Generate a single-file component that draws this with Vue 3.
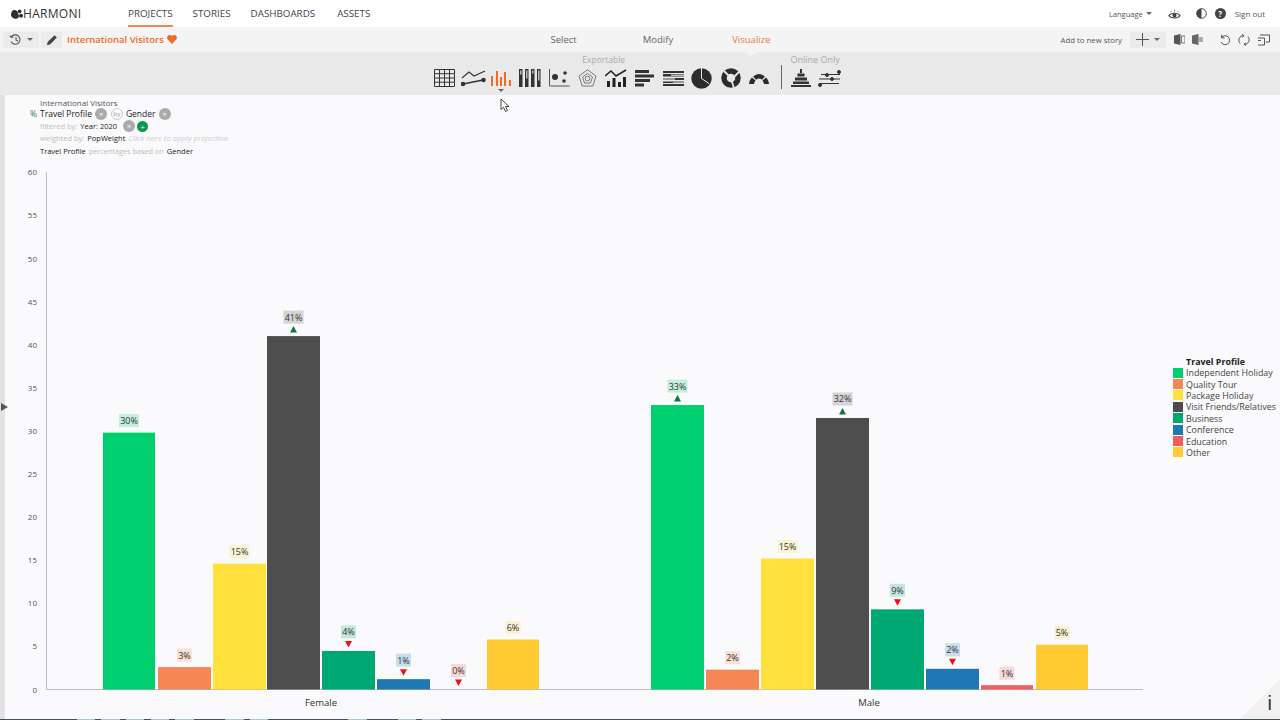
<template>
  <div class="app">
    <header class="nav">
      <div class="logo">
        <svg width="12" height="10" viewBox="0 0 12 10">
          <path d="M0 5.500C0 2.500 2 .5 4 1c1.500.3 2.500 1.500 3 3 .6 2 1.500 3 .5 4.500C6 10.300 3.500 10 2 9 .7 8.200 0 7 0 5.500z" fill="#2e2e2e" />
          <circle cx="8.600" cy="2.300" r="1.900" fill="#2e2e2e" />
          <circle cx="10" cy="6.800" r="2" fill="#2e2e2e" />
        </svg>
        <span>HARMONI</span>
      </div>
      <nav class="nav-links">
        <a class="active">PROJECTS</a>
        <a>STORIES</a>
        <a>DASHBOARDS</a>
        <a>ASSETS</a>
      </nav>
      <div class="nav-right">
        <span class="lang">Language <i class="caret"></i></span>
        <svg class="eye" width="13" height="12" viewBox="0 0 13 12">
          <path d="M1 7.500C3 4.500 10 4.500 12 7.500 10 10.800 3 10.800 1 7.500z" fill="none" stroke="#444" stroke-width="1.200" />
          <circle cx="6.500" cy="7.500" r="2" fill="#444" />
          <path d="M2.500 3 3.500 4M6.500 1.500v2M10.500 3 9.500 4" stroke="#777" stroke-width=".8" />
        </svg>
        <svg class="contrast" width="11" height="11" viewBox="0 0 11 11">
          <circle cx="5.500" cy="5.500" r="4.800" fill="#fff" stroke="#444" />
          <path d="M5.500.7a4.800 4.800 0 0 0 0 9.600z" fill="#444" />
        </svg>
        <span class="help">?</span>
        <span class="signout">Sign out</span>
      </div>
    </header>

    <div class="toolbar">
      <div class="tb-left">
        <button class="tb-btn hist">
          <svg width="13" height="12" viewBox="0 0 13 12" fill="none" stroke="#555" stroke-width="1.100">
            <path d="M2.200 3.200A4.700 4.700 0 1 1 2 7.500" />
            <path d="M.8 1.500 2.200 3.500 4.500 3" />
            <path d="M7 3.200V6l2 1.200" />
          </svg>
          <i class="caret"></i>
        </button>
        <button class="tb-btn pen">
          <svg width="12" height="12" viewBox="0 0 12 12">
            <path d="M1 11 1.600 8 8.500 1.200 10.800 3.500 4 10.400z" fill="#444" />
          </svg>
        </button>
        <span class="proj-title">International Visitors</span>
        <svg width="10" height="9" viewBox="0 0 10 9">
          <path d="M5 9 .8 4.600C-.8 2.600.6 0 2.700 0 3.800 0 4.600.6 5 1.300 5.400.6 6.200 0 7.300 0c2.100 0 3.500 2.600 1.900 4.600z" fill="#ee6c21" />
        </svg>
      </div>
      <div class="steps">
        <span>Select</span>
        <span>Modify</span>
        <span class="on">Visualize</span>
      </div>
      <div class="tb-right">
        <span class="add-story">Add to new story</span>
        <button class="tb-btn plus">
          <svg width="13" height="13" viewBox="0 0 13 13"><path d="M6.500 0v13M0 6.500h13" stroke="#555" /></svg>
          <i class="caret"></i>
        </button>
        <svg class="doc" width="11" height="11" viewBox="0 0 11 11">
          <path d="M0 1.500 6.500 0v11L0 9.500z" fill="#555" /><path d="M7.500 2H11v7H7.500z" fill="none" stroke="#777" />
        </svg>
        <svg class="doc" width="11" height="11" viewBox="0 0 11 11">
          <path d="M0 1.500 6.500 0v11L0 9.500z" fill="#666" /><path d="M7 3h4v5H7z" fill="#aaa" />
        </svg>
        <div class="undo-group">
          <svg width="12" height="12" viewBox="0 0 12 12" fill="none" stroke="#555">
            <path d="M2.500 3.500A4.500 4.500 0 1 1 2 8" /><path d="M2.500.8v3h3" />
          </svg>
          <svg width="12" height="12" viewBox="0 0 12 12" fill="none" stroke="#555">
            <path d="M2.200 9.500A4.500 4.500 0 0 1 5 1.700M9.800 2.500A4.500 4.500 0 0 1 7 10.300" /><path d="M4 .3 6 1.700 4.300 3.500M8 11.700 6 10.300 7.700 8.500" />
          </svg>
          <svg width="13" height="12" viewBox="0 0 13 12" fill="none" stroke="#555">
            <path d="M3 1h9.500v7H9M1 4h6.500v7H1" /><path d="M1 6.500h3" />
          </svg>
        </div>
      </div>
    </div>

    <div class="iconbar">
      <div class="tool-group">
        <div class="tool-label"></div>
        <div class="tools">
          <svg width="21" height="18" viewBox="0 0 21 18" fill="none" stroke="#333">
            <path d="M.5.5h20v17H.5zM.5 4.700h20M.5 9h20M.5 13.200h20M5.500.5v17M10.500.5v17M15.500.5v17" />
          </svg>
          <svg width="25" height="18" viewBox="0 0 25 18" fill="none" stroke="#333" stroke-width="1.100">
            <path d="M1 9 8 3l5 4 11-5" />
            <path d="M2 15 22 11" stroke-width="1.300" />
            <circle cx="2" cy="15" r="1.700" fill="#333" />
            <circle cx="22.500" cy="11" r="1.700" fill="#333" />
          </svg>
          <span class="active-tool">
            <svg width="21" height="16" viewBox="0 0 21 16" fill="#ee6c21">
              <path d="M0 6h2v10H0zM5 1h2v15H5zM9 7h2v9H9zM13 2h2v14h-2zM18 10h2v6h-2z" />
            </svg>
          </span>
          <svg width="22" height="18" viewBox="0 0 22 18">
            <g fill="#333">
              <path d="M0 0h3.500v18H0zM6 0h3.500v18H6zM12 0h3.500v18H12zM18 0h3.500v18H18z" />
            </g>
            <g fill="#bbb">
              <path d="M1 1.500h1.500v4H1zM7 1.500h1.500v8H7zM13 1.500h1.500v3H13zM19 1.500h1.500v10H19z" />
            </g>
          </svg>
          <svg width="21" height="18" viewBox="0 0 21 18">
            <path d="M.5 0v17h20" fill="none" stroke="#555" />
            <circle cx="6" cy="8" r="3" fill="#333" />
            <circle cx="16" cy="4" r="1.800" fill="#333" />
            <circle cx="15" cy="12" r="1.800" fill="#333" />
          </svg>
        </div>
      </div>
      <div class="tool-group export">
        <div class="tool-label">Exportable</div>
        <div class="tools">
          <svg width="19" height="18" viewBox="0 0 19 18" fill="none" stroke="#777">
            <path d="M9.500 .8 18 7l-3.200 10H4.200L1 7z" />
            <path d="M9.500 4.500 14.500 8l-2 6h-6l-2-6z" />
            <circle cx="9.500" cy="9.500" r="2.300" />
          </svg>
          <svg width="22" height="18" viewBox="0 0 22 18">
            <path d="M2 12h3v6H2zM7.500 9h3v9h-3zM13 13h3v5h-3zM18 8h3v10h-3z" fill="#222" />
            <path d="M0 7 6 2l5 5 5-3 5-3" fill="none" stroke="#222" stroke-width="1.500" />
          </svg>
          <svg width="20" height="17" viewBox="0 0 20 17" fill="#333">
            <path d="M0 0h14v3H0zM0 4.500h19v3H0zM0 9h15v3H0zM0 13.500h9v3H0z" />
          </svg>
          <svg width="21" height="15" viewBox="0 0 21 15">
            <path d="M0 0h21v2H0zM0 3h21v2.500H0zM0 7h21v2H0zM0 10.500h21V12H0zM0 13h21v2H0z" fill="#333" />
            <path d="M8 3.500h13v1.500H8zM0 7.300h12v1.400H0zM10 10.700h11v1.100H10z" fill="#bbb" />
          </svg>
          <svg width="21" height="21" viewBox="0 0 21 21">
            <circle cx="10.500" cy="10.500" r="10.200" fill="#2c2c2c" />
            <path d="M10.500 0v10.500l7.500 5" fill="none" stroke="#e9e9e9" stroke-width="1" />
          </svg>
          <svg width="20" height="20" viewBox="0 0 20 20">
            <circle cx="10" cy="10" r="7" fill="none" stroke="#2c2c2c" stroke-width="5.500" />
            <path d="M13 9 20 2M10 10 3 3M10 11 13 20" stroke="#e9e9e9" stroke-width="1.800" />
          </svg>
          <svg width="20" height="11" viewBox="0 0 20 11" fill="#2c2c2c">
            <path d="M0 11C.3 8 1.300 6 3 4.500L6.500 7.500C5.700 8.500 5.200 9.700 5 11z" />
            <path d="M4.200 3.500C6 2 8 1 10 1s4 1 5.800 2.500L13 6.800C12 6 11 5.500 10 5.500s-2 .5-3 1.300z" />
            <path d="M20 11c-.3-3-1.300-5-3-6.500L13.500 7.500c.8 1 1.300 2.200 1.500 3.500z" />
          </svg>
        </div>
      </div>
      <div class="tool-sep"></div>
      <div class="tool-group online">
        <div class="tool-label">Online Only</div>
        <div class="tools">
          <svg width="20" height="18" viewBox="0 0 20 18" fill="#333">
            <path d="M9 0h2v4H9zM6.500 4.500h7v3h-7zM4 8.500h12v3H4zM2 12.500h16v2.500H2zM0 16h20v2H0z" />
          </svg>
          <svg width="23" height="17" viewBox="0 0 23 17" stroke="#333" fill="#333">
            <path d="M3 4.500h19M1 9h21M1 13.500h20" stroke-width="1" fill="none" />
            <circle cx="21" cy="2" r="1.500" />
            <circle cx="9" cy="5" r="1.500" />
            <circle cx="14" cy="9" r="1.500" />
            <circle cx="2" cy="15" r="1.500" />
          </svg>
        </div>
      </div>
    </div>

    <main class="stage">
      <svg class="chart" width="1280" height="624" viewBox="0 95 1280 624">
        <g class="y-axis">
          <text v-for="t in ticks" :key="t" x="37" :y="yOf(t) + 3" text-anchor="end">{{ t }}</text>
        </g>
        <path d="M46.500 172V689.500H1143" fill="none" stroke="#bdbdbd" />
        <g v-for="b in bars" :key="b.x">
          <rect :x="b.x" :y="yOf(b.v)" :width="b.w" :height="689.5 - yOf(b.v)" :fill="b.color" />
          <rect
            :x="b.x + b.w / 2 - labelW(b) / 2"
            :y="labelY(b) - 9.5"
            :width="labelW(b)"
            height="13"
            :fill="b.color"
            fill-opacity="0.22"
          />
          <text class="pct" :x="b.x + b.w / 2" :y="labelY(b) + 0.5" text-anchor="middle">{{ b.label }}</text>
          <path v-if="b.dir === 'up'" :d="arrow(b, -1)" fill="#0e7a35" />
          <path v-if="b.dir === 'down'" :d="arrow(b, 1)" fill="#f50d14" />
        </g>
        <text class="cat" x="321" y="706" text-anchor="middle">Female</text>
        <text class="cat" x="869" y="706" text-anchor="middle">Male</text>
      </svg>

      <div class="side-strip"></div>
      <div class="side-arrow"></div>

      <div class="info">
        <div class="info-row title">International Visitors</div>
        <div class="info-row big">
          <span class="pc">%</span> <b>Travel Profile</b>
          <span class="x">×</span>
          <span class="by">by</span>
          <b>Gender</b>
          <span class="x">×</span>
        </div>
        <div class="info-row"><span class="mute">filtered by:</span> <b>Year: 2020</b>
          <span class="x gap">×</span>
          <span class="x green">+</span>
        </div>
        <div class="info-row"><span class="mute">weighted by:</span> <b>PopWeight</b>
          <em>Click here to apply projection</em>
        </div>
        <div class="info-row based"><b>Travel Profile</b> <span class="mute">percentages based on</span> <b>Gender</b></div>
      </div>

      <div class="legend">
        <div class="legend-title">Travel Profile</div>
        <div v-for="l in legend" :key="l.name" class="legend-row">
          <span class="swatch" :style="{ background: l.color }"></span>{{ l.name }}
        </div>
      </div>

      <svg class="cursor" width="11" height="15" viewBox="0 0 11 15">
        <path d="M1 1V11.500L3.500 9.300 5.500 13.500 7.500 12.500 5.500 8.500H9z" fill="#fff" stroke="#333" stroke-width=".9" />
      </svg>

      <div class="corner"><span>i</span></div>
    </main>

    <div class="bottom-line">
      <span
        v-for="(s, i) in edge"
        :key="i"
        :style="{ width: s + 'px', background: i % 2 ? '#a9c3d6' : '#3f5260' }"
      ></span>
    </div>
  </div>
</template>

<script setup>
const C = {
  indep: "#00cf6f",
  quality: "#f68655",
  pack: "#ffe03c",
  visit: "#4d4d4d",
  biz: "#00a871",
  conf: "#1f77b4",
  edu: "#f35c5c",
  other: "#ffca32",
};

const legend = [
  { name: "Independent Holiday", color: C.indep },
  { name: "Quality Tour", color: C.quality },
  { name: "Package Holiday", color: C.pack },
  { name: "Visit Friends/Relatives", color: C.visit },
  { name: "Business", color: C.biz },
  { name: "Conference", color: C.conf },
  { name: "Education", color: C.edu },
  { name: "Other", color: C.other },
];

const ticks = [0, 5, 10, 15, 20, 25, 30, 35, 40, 45, 50, 55, 60];
const yOf = (v) => 689.5 - v * 8.62;

const bars = [
  { x: 103, w: 52, v: 29.8, label: "30%", color: C.indep },
  { x: 158, w: 53, v: 2.6, label: "3%", color: C.quality },
  { x: 213, w: 53, v: 14.6, label: "15%", color: C.pack },
  { x: 267, w: 53, v: 41, label: "41%", color: C.visit, dir: "up" },
  { x: 322, w: 53, v: 4.47, label: "4%", color: C.biz, dir: "down" },
  { x: 377, w: 53, v: 1.2, label: "1%", color: C.conf, dir: "down" },
  { x: 432, w: 53, v: 0, label: "0%", color: C.edu, dir: "down" },
  { x: 487, w: 52, v: 5.8, label: "6%", color: C.other },
  { x: 651, w: 53, v: 33, label: "33%", color: C.indep, dir: "up" },
  { x: 706, w: 53, v: 2.3, label: "2%", color: C.quality },
  { x: 761, w: 53, v: 15.2, label: "15%", color: C.pack },
  { x: 816, w: 53, v: 31.5, label: "32%", color: C.visit, dir: "up" },
  { x: 871, w: 53, v: 9.3, label: "9%", color: C.biz, dir: "down" },
  { x: 926, w: 53, v: 2.4, label: "2%", color: C.conf, dir: "down" },
  { x: 981, w: 52, v: 0.5, label: "1%", color: C.edu },
  { x: 1036, w: 52, v: 5.2, label: "5%", color: C.other },
];

// dark / pale runs along the bottom edge of the page
const edge = [77, 18, 6, 19, 6, 18, 7, 18, 6, 19, 31, 19, 6, 18, 80, 19, 31, 18, 6, 19, 839];

// label sits higher when there is an arrow between it and the bar
const labelY = (b) => yOf(b.v) - (b.dir ? 16 : 9);
const labelW = (b) => (b.label.length > 2 ? 20 : 15);

const arrow = (b, d) => {
  const cx = b.x + b.w / 2;
  const top = yOf(b.v) - 10;
  return d > 0
    ? `M${cx - 3.5} ${top}h7l-3.5 6.500z`
    : `M${cx - 3.5} ${top + 6.5}h7l-3.5 -6.500z`;
};
</script>

<style>
html,
body {
  margin: 0;
  overflow: hidden;
}
</style>

<style scoped>
.app {
  width: 1280px;
  height: 720px;
  display: flex;
  flex-direction: column;
  font-family: "Open Sans", "Liberation Sans", sans-serif;
  color: #444;
  background: #fafafc;
  overflow: hidden;
}

.nav {
  height: 27px;
  flex: none;
  display: flex;
  align-items: center;
  background: #fff;
  box-sizing: border-box;
  padding-left: 11px;
}

.logo {
  display: flex;
  align-items: center;
  gap: 0;
  width: 117px;
  font-size: 12px;
  letter-spacing: 0.3px;
  color: #333;
}

.nav-links {
  display: flex;
  gap: 20px;
  height: 27px;
}

.nav-links a {
  display: flex;
  align-items: center;
  box-sizing: border-box;
  height: 27px;
  padding-top: 2px;
  font-size: 9.800px;
  color: #444;
  border-bottom: 2px solid transparent;
}

.nav-links a:last-child {
  margin-left: 2px;
}

.nav-links a.active {
  border-bottom-color: #ee8a55;
}

.nav-right {
  margin-left: auto;
  display: flex;
  align-items: center;
  font-size: 8px;
  color: #555;
  padding-right: 15px;
}

.lang {
  display: flex;
  align-items: center;
  gap: 3px;
  font-size: 7.500px;
}

.eye {
  margin-left: 16px;
}

.contrast {
  margin-left: 15px;
}

.help {
  width: 11px;
  height: 11px;
  border-radius: 50%;
  background: #444;
  color: #fff;
  font-size: 8px;
  font-weight: 700;
  line-height: 11px;
  text-align: center;
  margin-left: 8px;
}

.signout {
  margin-left: 9px;
}

.caret {
  display: inline-block;
  width: 0;
  height: 0;
  border-left: 3px solid transparent;
  border-right: 3px solid transparent;
  border-top: 3px solid #666;
}

.toolbar {
  height: 25px;
  flex: none;
  display: grid;
  grid-template-columns: 1fr auto 1fr;
  align-items: center;
  background: #f4f4f4;
}

.tb-left,
.tb-right {
  display: flex;
  align-items: center;
}

.tb-left {
  padding-left: 3px;
}

.tb-right {
  justify-content: flex-end;
  padding-right: 10px;
}

.tb-btn {
  display: flex;
  align-items: center;
  justify-content: center;
  gap: 5px;
  height: 16px;
  border: 0;
  padding: 0;
  background: #ebebeb;
}

.hist {
  width: 36px;
}

.pen {
  width: 21px;
  margin-left: 2px;
}

.proj-title {
  font-size: 9.500px;
  font-weight: 600;
  color: #ee6c21;
  margin: 0 3px 0 5px;
}

.steps {
  display: flex;
  gap: 59px;
  font-size: 9.500px;
  color: #666;
  margin-left: 41px;
}

.steps span:first-child {
  margin-right: 7px;
}

.steps .on {
  color: #ee7a3a;
}

.add-story {
  font-size: 7.800px;
  color: #555;
  margin-right: 8px;
}

.plus {
  width: 36px;
}

.doc {
  margin-left: 7px;
}

.plus + .doc {
  margin-left: 8px;
}

.undo-group {
  display: flex;
  gap: 7px;
  margin-left: 16px;
}

.iconbar {
  position: relative;
  height: 43px;
  flex: none;
  display: flex;
  justify-content: center;
  align-items: flex-end;
  background: #e9e9e9;
  padding: 0 6px 6px 0;
  box-sizing: border-box;
}

.iconbar::before {
  content: "";
  position: absolute;
  left: 744px;
  top: 0;
  border-left: 7px solid transparent;
  border-right: 7px solid transparent;
  border-top: 4px solid #f4f4f4;
}

.tool-group {
  display: flex;
  flex-direction: column;
}

.tools {
  display: grid;
  grid-auto-flow: column;
  grid-auto-columns: 28.600px;
  justify-items: center;
  align-items: center;
  height: 22px;
}

.active-tool {
  position: relative;
  display: flex;
}

/* small caret under the selected chart type */
.active-tool::after {
  content: "";
  position: absolute;
  left: 7px;
  top: 19px;
  border-left: 3px solid transparent;
  border-right: 3px solid transparent;
  border-top: 3px solid #666;
}

.tool-label {
  font-size: 9px;
  color: #aaa;
  line-height: 15px;
  height: 15px;
}

.export .tool-label {
  font-size: 8.500px;
  padding-left: 9px;
}

.online .tool-label {
  padding-left: 4px;
}

.tool-sep {
  width: 1px;
  height: 24px;
  background: #666;
  margin: 0 4px 0 8px;
}

.stage {
  position: relative;
  flex: 1;
}

.chart {
  display: block;
}

.y-axis text {
  font-size: 8px;
  fill: #555;
}

.pct {
  font-size: 9px;
  fill: #333;
}

.cat {
  font-size: 9.500px;
  fill: #333;
}

.side-strip {
  position: absolute;
  left: 0;
  top: 0;
  bottom: 0;
  width: 5px;
  background: #e2e2e2;
}

.side-arrow {
  position: absolute;
  left: 1px;
  top: 308px;
  border-top: 4.500px solid transparent;
  border-bottom: 4.500px solid transparent;
  border-left: 7px solid #555;
}

.info {
  position: absolute;
  left: 30px;
  top: 2px;
  font-size: 7.500px;
  line-height: 12px;
  color: #555;
}

.info-row {
  display: flex;
  align-items: center;
  gap: 3px;
  white-space: nowrap;
  height: 12px;
}

.info-row b {
  font-weight: 400;
  color: #222;
}

.info-row.title {
  font-size: 8px;
  padding-left: 10px;
  height: 11px;
}

.info-row.big {
  font-size: 8.500px;
}

.info-row:not(.big):not(.title) {
  padding-left: 10px;
}

.based {
  margin-top: 1px;
}

.based .mute {
  font-size: 7.300px;
}

.pc {
  color: #2f7d5b;
}

.mute {
  color: #bbb;
}

.info em {
  font-size: 7.800px;
  color: #ccc;
}

.x {
  width: 12px;
  height: 12px;
  border-radius: 50%;
  background: #aaa;
  color: #fff;
  font-size: 8px;
  line-height: 12px;
  text-align: center;
  flex: none;
}

.x.gap {
  margin-left: 3px;
}

.x.green {
  width: 11px;
  height: 11px;
  line-height: 11px;
  background: #0b9a4a;
  margin-left: -1px;
}

.by {
  box-sizing: border-box;
  width: 12px;
  height: 12px;
  border-radius: 50%;
  border: 1px solid #ccc;
  font-size: 6px;
  line-height: 10px;
  text-align: center;
  color: #999;
  margin: 0 0 0 1px;
}

.legend {
  position: absolute;
  left: 1173px;
  top: 261px;
  font-size: 8.900px;
  color: #444;
}

.legend-title {
  font-weight: 700;
  color: #222;
  padding-left: 13px;
  line-height: 11px;
}

.legend-row {
  display: flex;
  align-items: center;
  height: 11.400px;
  white-space: nowrap;
}

.swatch {
  width: 10px;
  height: 10px;
  margin-right: 3px;
  flex: none;
}

.cursor {
  position: absolute;
  left: 500px;
  top: 3px;
}

.corner {
  position: absolute;
  right: 0;
  bottom: 0;
  width: 0;
  height: 0;
  border-left: 40px solid transparent;
  border-bottom: 40px solid #f1f1f1;
}

.corner span {
  position: absolute;
  right: 8px;
  top: 13px;
  font-family: "Liberation Sans", sans-serif;
  font-size: 20px;
  line-height: 22px;
  color: #333;
}

.bottom-line {
  flex: none;
  display: flex;
  height: 1px;
}
</style>
